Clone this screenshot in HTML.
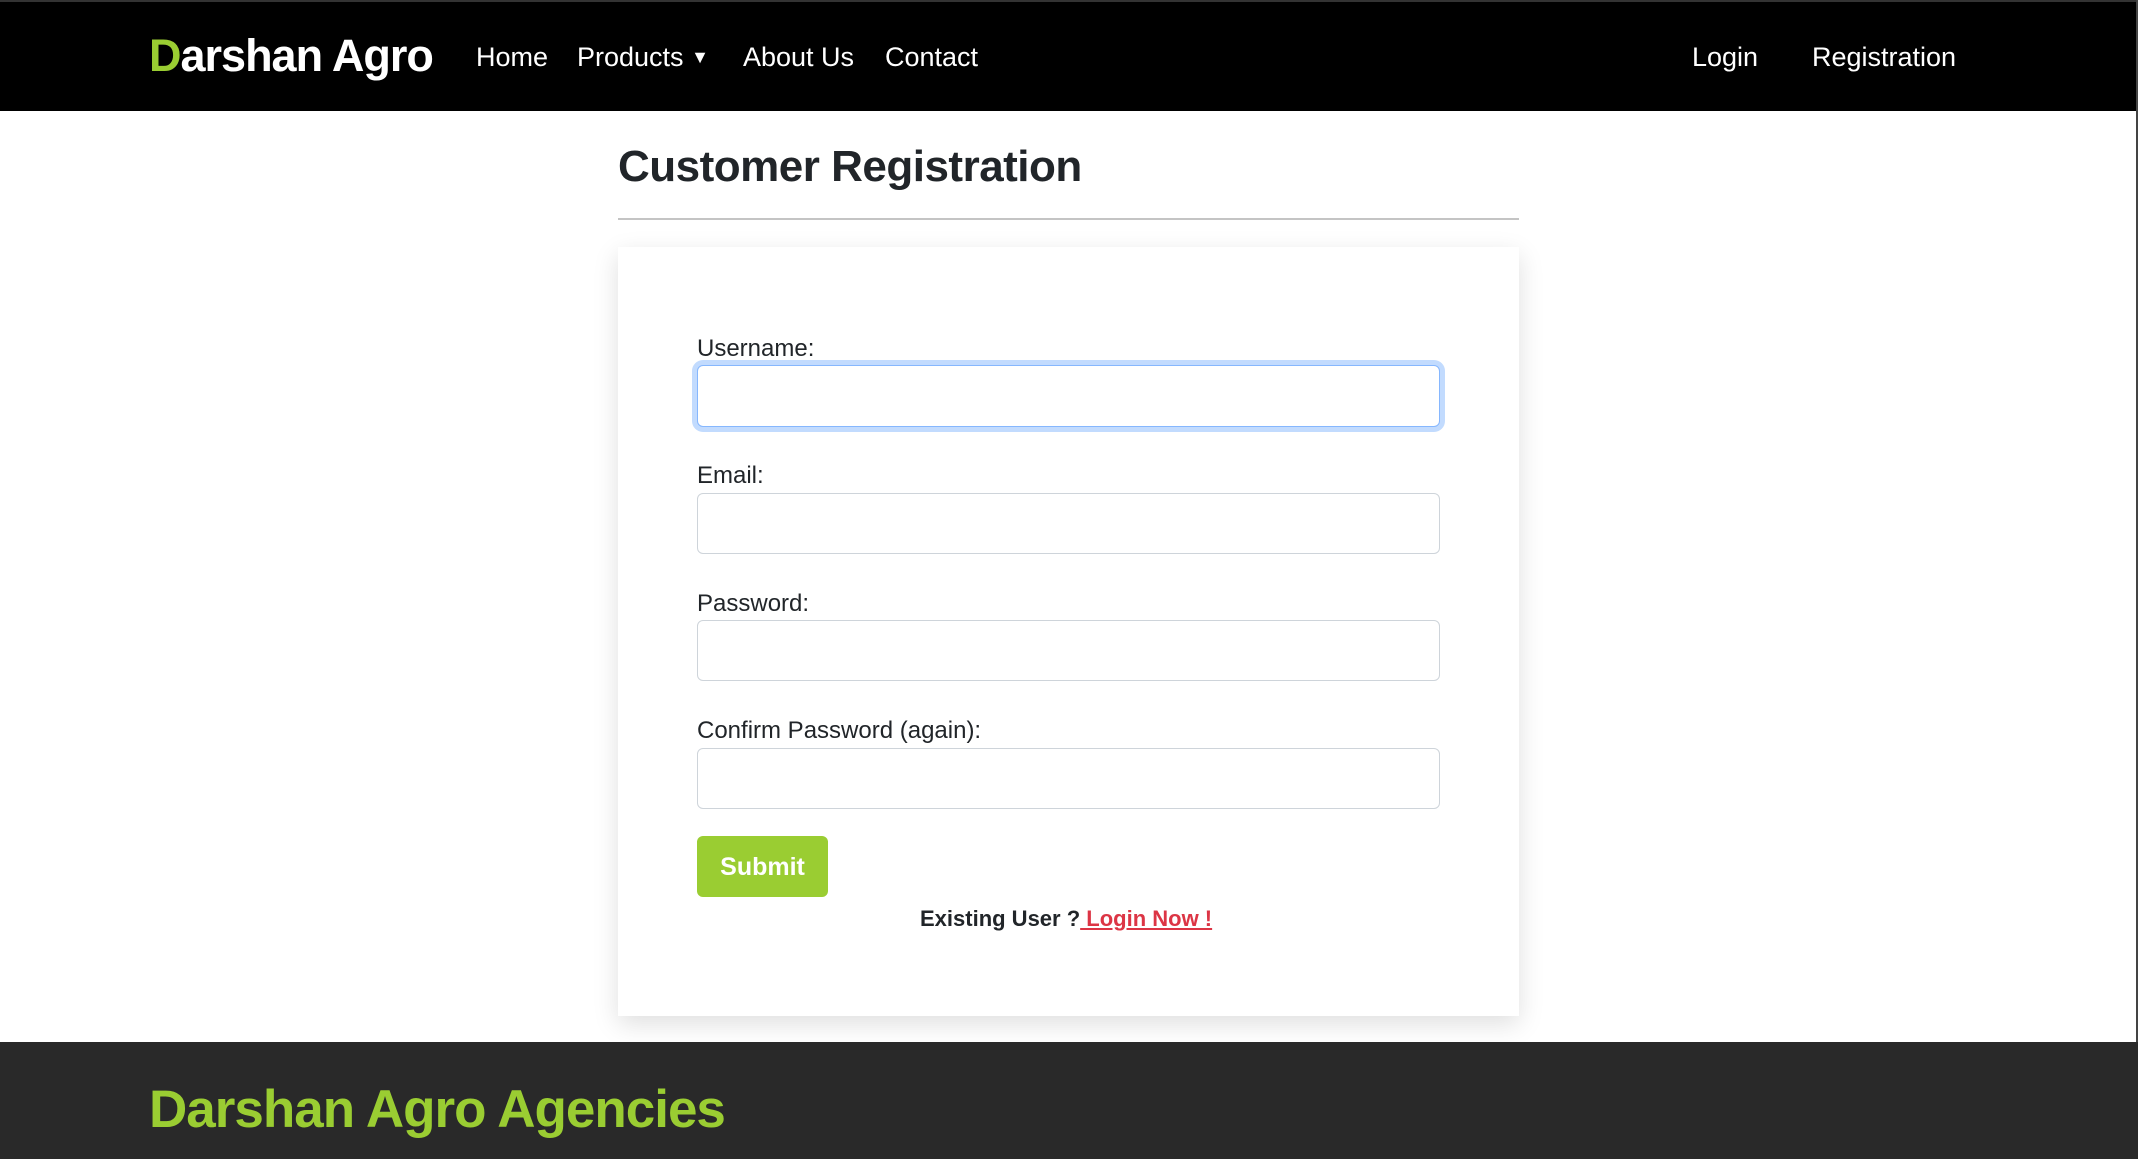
<!DOCTYPE html>
<html><head><meta charset="utf-8"><style>
*{margin:0;padding:0;box-sizing:border-box}
body{width:2138px;height:1159px;position:relative;overflow:hidden;background:#fff;font-family:"Liberation Sans",sans-serif;color:#212529}
.a{position:absolute;white-space:nowrap}
nav{position:absolute;left:0;top:0;width:2138px;height:111px;background:#000;border-top:2px solid #333}
.n{position:absolute;color:#fff;font-size:27px;top:38px;line-height:34px}
.lbl{position:absolute;left:697px;font-size:24px;line-height:30px}
.inp{position:absolute;left:697px;width:743px;height:61px;border:1px solid #ced4da;border-radius:6px;background:#fff}
</style></head><body>
<nav>
<div class="a" style="left:149px;top:27px;font-size:45px;font-weight:bold;color:#fff;line-height:54px;letter-spacing:-1px"><span style="color:#9acd32">D</span>arshan Agro</div>
<div class="n" style="left:476px">Home</div>
<div class="n" style="left:577px">Products <span style="font-size:18px;vertical-align:3px">▼</span></div>
<div class="n" style="left:743px">About Us</div>
<div class="n" style="left:885px">Contact</div>
<div class="n" style="left:1692px">Login</div>
<div class="n" style="left:1812px">Registration</div>
</nav>
<div style="position:absolute;right:0;top:0;width:2px;height:1042px;background:#444"></div>
<div class="a" style="left:618px;top:139px;font-size:44px;font-weight:bold;line-height:56px;letter-spacing:-0.5px;color:#212529">Customer Registration</div>
<div style="position:absolute;left:618px;top:218px;width:901px;height:2px;background:#c4c4c4"></div>
<div style="position:absolute;left:618px;top:247px;width:901px;height:769px;background:#fff;box-shadow:0 8px 24px rgba(0,0,0,0.13)"></div>
<div class="lbl" style="top:334px">Username:</div>
<div class="inp" style="top:365px;border-color:#86b7fe;box-shadow:0 0 0 5px #c2dbfe;height:62px"></div>
<div class="lbl" style="top:461px">Email:</div>
<div class="inp" style="top:493px"></div>
<div class="lbl" style="top:589px">Password:</div>
<div class="inp" style="top:620px"></div>
<div class="lbl" style="top:716px">Confirm Password (again):</div>
<div class="inp" style="top:748px"></div>
<div style="position:absolute;left:697px;top:836px;width:131px;height:61px;background:#9acd32;border-radius:6px;color:#fff;font-weight:bold;font-size:25px;text-align:center;line-height:63px">Submit</div>
<div class="a" style="left:920px;top:905px;font-size:22px;font-weight:bold;line-height:28px">Existing User ?<span style="color:#dc3545;text-decoration:underline"> Login Now !</span></div>
<div style="position:absolute;left:0;top:1042px;width:2138px;height:117px;background:#292929"></div>
<div class="a" style="left:149px;top:1079px;font-size:53px;font-weight:bold;color:#9acd32;line-height:62px;letter-spacing:-1px">Darshan Agro Agencies</div>
</body></html>
